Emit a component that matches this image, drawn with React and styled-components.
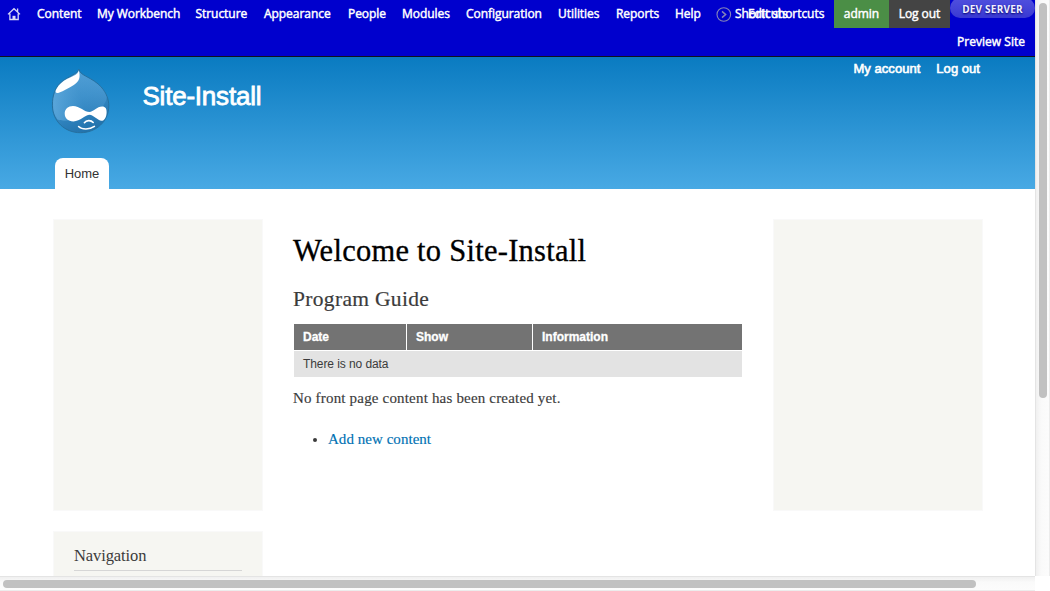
import React from "react";
import styled, { createGlobalStyle } from "styled-components";

const sans = '"Liberation Sans", Arial, sans-serif';
const serif = '"Liberation Serif", Georgia, serif';

const Global = createGlobalStyle`
  *, *::before, *::after { box-sizing: border-box; }
  html, body { margin: 0; background: #fff; overflow: hidden; }
  a { text-decoration: none; color: inherit; }
`;

const Window = styled.div`
  display: grid;
  grid-template: 576px 15px / 1035px 15px;
  width: 1050px;
  height: 591px;
  overflow: hidden;
`;
const Page = styled.div`
  overflow: hidden;
  min-width: 0;
  background: #fff;
`;

const AdminBar = styled.nav`
  height: 57px;
  background: #0000cd;
  border-bottom: 1px solid #10101c;
  color: #fff;
  font: 400 12px/28px "Open Sans", sans-serif;
  letter-spacing: -0.05px;
  -webkit-text-stroke: 0.45px currentColor;
`;
const AdminRow = styled.div`
  display: flex;
  height: 28px;
`;
const PreviewRow = styled(AdminRow)`
  justify-content: flex-end;
  padding-right: 10px;
  letter-spacing: 0.02px;
`;
const HomeLink = styled.a`
  width: 29px;
  height: 28px;
  padding: 7px 0 0 7px;
  line-height: 0;
`;
const MenuLink = styled.a`
  width: ${(p) => p.$w}px;
  padding-left: 8px;
  white-space: nowrap;
`;
const Shortcuts = styled.div`
  display: flex;
  width: 124px;
  padding-left: 6px;
  white-space: nowrap;
`;
const ShortcutIcon = styled.span`
  width: 19px;
  padding-top: 7px;
  line-height: 0;
`;
const ShortcutLabel = styled.span`
  width: 13px;
`;
const UserLink = styled.a`
  width: ${(p) => p.$w}px;
  height: 28px;
  text-align: center;
  white-space: nowrap;
  background: ${(p) => p.$bg};
`;
const ServerBadge = styled.span`
  width: 85px;
  height: 20px;
  margin-top: -2px;
  border-radius: 10px;
  background: linear-gradient(#5050de, #4444d8 55%, #3838d2);
  font-size: 10px;
  font-weight: 700;
  line-height: 22px;
  letter-spacing: 0.22px;
  text-align: center;
  white-space: nowrap;
  color: #f0f0ff;
  text-shadow: 0 1px 2px #00006a;
  -webkit-text-stroke: 0;
`;

const Header = styled.header`
  display: flex;
  flex-direction: column;
  justify-content: space-between;
  height: 132px;
  background: linear-gradient(#0a7bc1, #48a9e4);
  color: #fff;
`;
const Branding = styled.div`
  display: flex;
  padding: 12px 55px 0 50px;
`;
const SiteName = styled.h1`
  margin: 9px 0 0 32.5px;
  font: 400 26px/36px ${sans};
  letter-spacing: -0.22px;
  -webkit-text-stroke: 0.8px #fff;
  flex: 1;
`;
const UserMenu = styled.div`
  display: flex;
  gap: 16px;
  margin: -8px 0 0;
  font: 400 13px/15px ${sans};
  letter-spacing: 0.04px;
  -webkit-text-stroke: 0.6px #fff;
`;
const Tab = styled.a`
  width: 54px;
  height: 31px;
  margin-left: 55px;
  border-radius: 8px 8px 0 0;
  background: #fff;
  color: #333;
  font: 400 13px/31px ${sans};
  text-align: center;
`;

const Columns = styled.main`
  display: grid;
  grid-template-columns: 210px 450px 210px;
  column-gap: 30px;
  padding: 30px 0 0 53px;
`;
const Sidebar = styled.aside`
  display: flex;
  flex-direction: column;
  gap: 20px;
`;
const Block = styled.section`
  height: 292px;
  padding: 12px 20px 0 20px;
  background: #f6f6f2;
  border: 1px solid #f9f9f9;
`;
const BlockTitle = styled.h2`
  margin: 0;
  padding-bottom: 2px;
  border-bottom: 1px solid #d6d6d6;
  font: 400 16.5px/24px ${serif};
  letter-spacing: -0.1px;
  color: #3b3b3b;
`;
const Content = styled.article`
  padding-top: 14px;
  font: 400 15px/20px ${serif};
  color: #3b3b3b;
`;
const Title = styled.h2`
  margin: 0;
  font: 400 30.5px/36px ${serif};
  letter-spacing: 0.26px;
  color: #000;
  -webkit-text-stroke: 0.3px #000;
`;
const Subtitle = styled.h3`
  margin: 17px 0 12px;
  font: 400 21.5px/26px ${serif};
  letter-spacing: 0.32px;
  -webkit-text-stroke: 0.2px;
`;
const GuideTable = styled.div`
  display: grid;
  grid-template-columns: 112px 125px 209px;
  gap: 1px;
  margin-left: 1px;
  font: 400 12px/26px ${sans};
`;
const HeadCell = styled.div`
  height: 26px;
  padding-left: 9px;
  background: #737373;
  color: #fff;
  font-weight: 700;
  white-space: nowrap;
  -webkit-text-stroke: 0.3px #fff;
`;
const EmptyCell = styled.div`
  grid-column: 1 / -1;
  height: 26px;
  padding-left: 9px;
  background: #e3e3e3;
  letter-spacing: -0.08px;
`;
const Message = styled.p`
  margin: 11px 0 0;
  letter-spacing: 0.18px;
  white-space: nowrap;
  -webkit-text-stroke: 0.15px;
`;
const ActionList = styled.ul`
  margin: 21px 0 0;
  padding-left: 35px;
`;
const ActionLink = styled.a`
  color: #0071b3;
  letter-spacing: 0.04px;
  -webkit-text-stroke: 0.15px;
`;

const VTrack = styled.div`
  padding: 3px 3px 0;
  background: linear-gradient(90deg, #f0f0f0, #fafafa 40%, #fcfcfc);
  border-left: 1px solid #e4e4e4;
  border-right: 1px solid #ececec;
`;
const VThumb = styled.div`
  width: 8px;
  height: 395px;
  border-radius: 4px;
  background: #c1c1c1;
`;
const HTrack = styled.div`
  padding: 3px;
  background: linear-gradient(#f0f0f0, #fafafa 40%, #fcfcfc);
  border-top: 1px solid #e4e4e4;
  border-bottom: 1px solid #ececec;
`;
const HThumb = styled.div`
  width: 973px;
  height: 8px;
  border-radius: 4px;
  background: #c1c1c1;
`;

const menu = [
  ["Content", 60],
  ["My Workbench", 98.5],
  ["Structure", 68.5],
  ["Appearance", 84],
  ["People", 54],
  ["Modules", 64],
  ["Configuration", 92],
  ["Utilities", 58],
  ["Reports", 59],
  ["Help", 43],
];

function HomeIcon() {
  return (
    <svg width="14" height="14" viewBox="0 0 14 14" fill="none" stroke="#d8d8f6" strokeWidth="1.3">
      <path d="M1 7.4 L7 1.7 L13 7.4 M2.9 6.5 V12.5 H11.2 V6.5 M10.6 4.8 V1.5" />
      <path d="M5.5 12.5 V8.8 H8.5 V12.5 Z" fill="#d8d8f6" stroke="none" />
    </svg>
  );
}

function ArrowIcon() {
  return (
    <svg width="16" height="16" viewBox="0 0 16 16" fill="none" stroke="#8585b8">
      <circle cx="7.8" cy="7.5" r="6.8" strokeWidth="1.1" />
      <path d="M6 4.4 L9.6 7.5 L6 10.6" strokeWidth="1.5" />
    </svg>
  );
}

function Logo() {
  return (
    <svg width="60" height="66" viewBox="0 0 60 66">
      <defs>
        <linearGradient id="body" x1="0.2" y1="0" x2="0.6" y2="1">
          <stop offset="0" stopColor="#5ca7db" />
          <stop offset="0.5" stopColor="#3c8fc9" />
          <stop offset="0.75" stopColor="#2c7fba" />
          <stop offset="1" stopColor="#2272ab" />
        </linearGradient>
        <linearGradient id="shine" x1="0" y1="0.6" x2="1" y2="0.3">
          <stop offset="0" stopColor="#6bb3e4" stopOpacity="0.55" />
          <stop offset="0.5" stopColor="#4395d0" stopOpacity="0.25" />
          <stop offset="1" stopColor="#5ba6dc" stopOpacity="0.4" />
        </linearGradient>
      </defs>
      <path
        d="M28.9 0.2 C29.6 3.4 31.7 4.9 35.5 7 C42 10.5 47.4 13.7 51.2 18 C56.2 24 58.8 30.5 58.8 36.8 C58.8 52.5 46 63.7 30.4 63.7 C14.7 63.7 2.4 52 2.4 36.2 C2.4 26 5.2 19.3 10 14.2 C14 10.4 19 8.2 22.8 6 C26.2 3.8 28.4 2.8 28.9 0.2 Z"
        fill="url(#body)"
        stroke="#26709f"
        strokeWidth="1"
      />
      <path
        d="M31 6 C43 10.5 54 18 56.8 28 C55.5 39 45 45 32 48.5 C23 51 14 53 7.5 50.5 C4 46 3.1 41 3.1 36 C3 26 6 20 11 15 C17 10 25 7 28.9 3.5 Z"
        fill="url(#shine)"
      />
      <path
        d="M28.8 1.2 C30.6 8.6 29.6 11.8 23.8 16 C18.8 19.2 13.8 21.7 8.8 23.8 C5.7 24.7 4.7 22.8 6.4 20 C9 15.6 12.4 12.4 17.4 9.8 C23.9 6.4 28.1 5.6 28.8 1.2 Z"
        fill="#fff"
      />
      <path
        d="M23 36.9 C29.6 36.9 34.8 43 39.4 43 C43.4 43 46.9 37.6 52.2 37.6 C55.5 37.6 56.6 39.9 56.6 42.9 C56.6 47.7 54.6 51.8 51.4 51.8 C48 51.8 43.3 45.8 39.6 45.8 C35.4 45.8 30.3 52.4 23.4 52.4 C18 52.4 14.7 49.3 14.7 44.6 C14.7 39.9 18.2 36.9 23 36.9 Z"
        fill="#fff"
      />
      <path
        d="M34.4 53.7 C36.3 51.2 40.8 50.7 43.2 53.5 M28.6 57.5 C32 60.8 39.5 60.8 44.4 57.4"
        fill="none"
        stroke="#fff"
        strokeWidth="1.6"
        strokeLinecap="round"
      />
    </svg>
  );
}

export default function App() {
  return (
    <>
      <Global />
      <Window>
        <Page>
          <AdminBar>
            <AdminRow>
              <HomeLink><HomeIcon /></HomeLink>
              {menu.map(([label, w]) => (
                <MenuLink key={label} $w={w}>{label}</MenuLink>
              ))}
              <Shortcuts>
                <ShortcutIcon><ArrowIcon /></ShortcutIcon>
                <ShortcutLabel>Shortcuts</ShortcutLabel>
                <span>Edit shortcuts</span>
              </Shortcuts>
              <UserLink $w={55} $bg="#4b8e46">admin</UserLink>
              <UserLink $w={61} $bg="#444">Log out</UserLink>
              <ServerBadge>DEV SERVER</ServerBadge>
            </AdminRow>
            <PreviewRow><a>Preview Site</a></PreviewRow>
          </AdminBar>
          <Header>
            <Branding>
              <Logo />
              <SiteName>Site-Install</SiteName>
              <UserMenu>
                <a>My account</a>
                <a>Log out</a>
              </UserMenu>
            </Branding>
            <Tab>Home</Tab>
          </Header>
          <Columns>
            <Sidebar>
              <Block />
              <Block><BlockTitle>Navigation</BlockTitle></Block>
            </Sidebar>
            <Content>
              <Title>Welcome to Site-Install</Title>
              <Subtitle>Program Guide</Subtitle>
              <GuideTable>
                <HeadCell>Date</HeadCell>
                <HeadCell>Show</HeadCell>
                <HeadCell>Information</HeadCell>
                <EmptyCell>There is no data</EmptyCell>
              </GuideTable>
              <Message>No front page content has been created yet.</Message>
              <ActionList>
                <li><ActionLink>Add new content</ActionLink></li>
              </ActionList>
            </Content>
            <Sidebar><Block /></Sidebar>
          </Columns>
        </Page>
        <VTrack><VThumb /></VTrack>
        <HTrack><HThumb /></HTrack>
      </Window>
    </>
  );
}
